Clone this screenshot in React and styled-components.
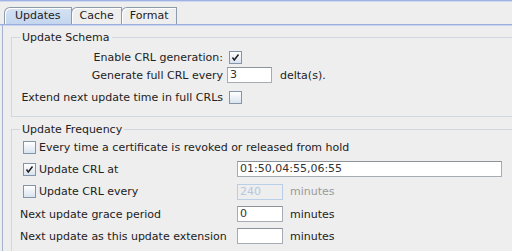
import styled, { createGlobalStyle } from "styled-components";

const GlobalStyle = createGlobalStyle`
  html, body {
    margin: 0;
    padding: 0;
    background: #eeeeee;
  }
  body {
    font-family: "DejaVu Sans", "Liberation Sans", sans-serif;
    font-size: 11px;
    color: #222222;
  }
`;

const Window = styled.div`
  width: 512px;
  height: 251px;
  overflow: hidden;
  background: #eeeeee;
  border-top: 1px solid #9fb2e2;
  box-shadow: inset 0 1px 0 #cdd8f2;
  box-sizing: border-box;
`;

const TabStrip = styled.div`
  display: flex;
  padding: 6px 0 0 4px;
  border-bottom: 1px solid #9aaedf;
  box-shadow: 0 1px 0 #cad6f0;
`;

const Tab = styled.div`
  height: 16px;
  line-height: 16px;
  padding: ${(p) => (p.$active ? "0 10px 0 10px" : "0 7px 0 8px")};
  margin-right: -1px;
  border: 1px solid #8d9aa8;
  border-bottom: none;
  border-top-left-radius: 6px;
  background: ${(p) =>
    p.$active ? "linear-gradient(#d5e2f3, #c4d6ee)" : "#eeeeee"};
  box-shadow: inset 1px 1px 0 #ffffff;
  position: relative;
  z-index: ${(p) => (p.$active ? 1 : 0)};
`;

const Panel = styled.div`
  margin-left: 2px;
  border-left: 1px solid #a3b3d0;
  padding-top: 6px;
  height: 240px;
`;

const Group = styled.fieldset`
  margin: ${(p) => p.$top || 0}px -30px 0 8px;
  padding: ${(p) => p.$pad};
  border: 1px solid #cfd7e0;
  border-right: none;
  min-width: 0;
`;

const Legend = styled.legend`
  padding: 0 2px;
  margin: 0;
  line-height: 13px;
`;

const Row = styled.div`
  display: flex;
  align-items: center;
  height: ${(p) => p.$height || 18}px;
  margin-top: ${(p) => p.$top || 0}px;
  gap: ${(p) => p.$gap ?? 4}px;
`;

const LabelCell = styled.div`
  flex: none;
  width: ${(p) => p.$width}px;
  white-space: nowrap;
  display: flex;
  align-items: center;
  justify-content: ${(p) => (p.$right ? "flex-end" : "flex-start")};
  gap: 3px;
  padding-left: ${(p) => p.$indent || 0}px;
  box-sizing: border-box;
`;

const Label = styled.span`
  white-space: nowrap;
  margin-left: ${(p) => p.$space || 0}px;
  color: ${(p) => (p.$disabled ? "#9a9a9a" : "#222222")};
`;

const Box = styled.span`
  width: 11px;
  height: 11px;
  margin-left: ${(p) => p.$shift || 0}px;
  border: 1px solid #8395a8;
  background: linear-gradient(#ffffff, #d9e3ef);
  display: inline-flex;
  align-items: center;
  justify-content: center;
  flex: none;
`;

const Field = styled.div`
  box-sizing: border-box;
  flex: none;
  width: ${(p) => p.$width}px;
  height: 16px;
  line-height: 14px;
  padding-left: 2px;
  background: ${(p) => (p.$disabled ? "#eeeeee" : "#ffffff")};
  border: 1px solid ${(p) => (p.$disabled ? "#b9d0e8" : "#a5acb4")};
  border-top-color: ${(p) => (p.$disabled ? "#b9d0e8" : "#8c939b")};
  color: ${(p) => (p.$disabled ? "#b3c8de" : "#333333")};
  margin-right: 3px;
`;

const Check = ({ checked, shift }) => (
  <Box $shift={shift}>
    {checked && (
      <svg width="9" height="9" viewBox="0 0 9 9">
        <path d="M1.5 4.5 L3.3 7 L7.5 1.5" fill="none" stroke="#1a1a1a" strokeWidth="1.4" />
      </svg>
    )}
  </Box>
);

export default function App() {
  return (
    <>
      <GlobalStyle />
      <Window>
        <TabStrip>
          <Tab $active>Updates</Tab>
          <Tab>Cache</Tab>
          <Tab>Format</Tab>
        </TabStrip>
        <Panel>
          <Group $pad="4px 0 10px 8px">
            <Legend>Update Schema</Legend>
            <Row>
              <LabelCell $width={203} $right>Enable CRL generation:</LabelCell>
              <Check checked shift={2} />
            </Row>
            <Row>
              <LabelCell $width={203} $right>Generate full CRL every</LabelCell>
              <Field $width={45}>3</Field>
              <Label $space={1}>delta(s).</Label>
            </Row>
            <Row $top={4}>
              <LabelCell $width={203} $right>Extend next update time in full CRLs</LabelCell>
              <Check shift={2} />
            </Row>
          </Group>
          <Group $top={6} $pad="0 0 8px 8px">
            <Legend>Update Frequency</Legend>
            <Row $height={22}>
              <LabelCell $width={400} $indent={3}>
                <Check />
                Every time a certificate is revoked or released from hold
              </LabelCell>
            </Row>
            <Row $height={22} $gap={0}>
              <LabelCell $width={217} $indent={3}>
                <Check checked />
                Update CRL at
              </LabelCell>
              <Field $width={265}>01:50,04:55,06:55</Field>
            </Row>
            <Row $height={23} $gap={0}>
              <LabelCell $width={217} $indent={3}>
                <Check />
                Update CRL every
              </LabelCell>
              <Field $width={46} $disabled>240</Field>
              <Label $disabled $space={4}>minutes</Label>
            </Row>
            <Row $height={22} $gap={0}>
              <LabelCell $width={217}>Next update grace period</LabelCell>
              <Field $width={46}>0</Field>
              <Label $space={4}>minutes</Label>
            </Row>
            <Row $height={22} $gap={0}>
              <LabelCell $width={217}>Next update as this update extension</LabelCell>
              <Field $width={46} />
              <Label $space={4}>minutes</Label>
            </Row>
          </Group>
        </Panel>
      </Window>
    </>
  );
}
